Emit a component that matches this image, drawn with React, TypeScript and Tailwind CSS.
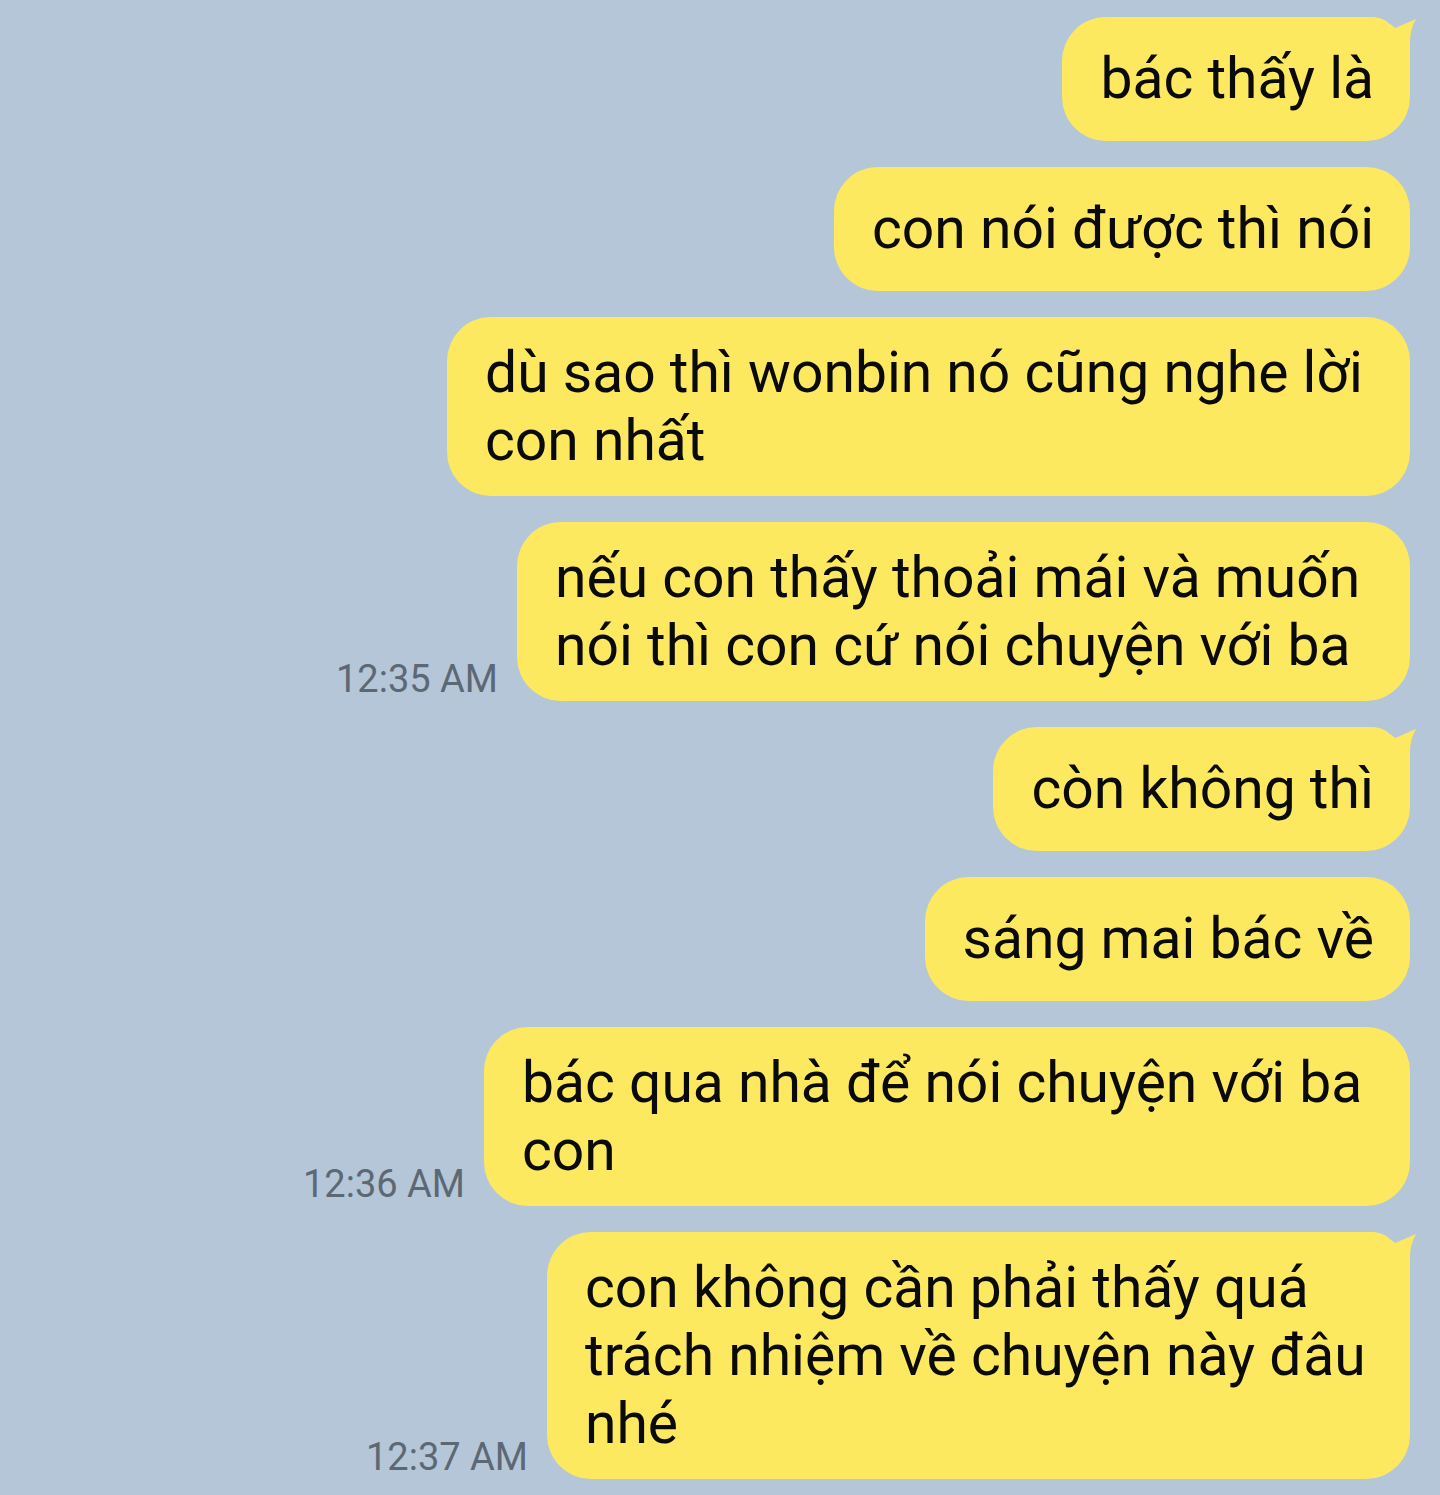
import type { ReactNode } from 'react';

type Message = {
  lines: string[];
  time?: string;
  tail?: boolean;
  width?: string;
};

const messages: Message[] = [
  { lines: ['bác thấy là'], tail: true },
  { lines: ['con nói được thì nói'] },
  { lines: ['dù sao thì wonbin nó cũng nghe lời', 'con nhất'], width: 'w-[963px]' },
  { lines: ['nếu con thấy thoải mái và muốn', 'nói thì con cứ nói chuyện với ba'], time: '12:35 AM', width: 'w-[893px]' },
  { lines: ['còn không thì'], tail: true },
  { lines: ['sáng mai bác về'] },
  { lines: ['bác qua nhà để nói chuyện với ba', 'con'], time: '12:36 AM', width: 'w-[926px]' },
  { lines: ['con không cần phải thấy quá', 'trách nhiệm về chuyện này đâu', 'nhé'], time: '12:37 AM', tail: true, width: 'w-[863px]' },
];

// little "ear" on the top-right corner of the first bubble in a group
function Tail() {
  return (
    <svg className="absolute top-0 right-0 w-[58px] h-[50px]" viewBox="0 0 58 50" fill="none">
      <path d="M0 0 L14 0 Q27 1 33 12 L56 2 Q50 12 50 25 L50 50 L0 50 Z" fill="#fde95f" />
    </svg>
  );
}

function Bubble({ msg }: { msg: Message }) {
  const multi = msg.lines.length > 1;
  const content: ReactNode[] = [];
  msg.lines.forEach((line, i) => {
    if (i > 0) content.push(<br key={`br-${i}`} />);
    content.push(<span key={`l-${i}`}>{line}</span>);
  });

  return (
    <div className="flex justify-end items-end">
      {msg.time && (
        <span className="mr-[19px] text-[38px] leading-[44px] text-[#5d6875] whitespace-nowrap">
          {msg.time}
        </span>
      )}
      <div
        className={`relative bg-[#fde95f] rounded-[44px] pl-[38px] pr-[36px] text-[57px] leading-[68px] text-[#0a0a0a] whitespace-nowrap ${
          multi ? 'pt-[22px] pb-[21px]' : 'py-[28px]'
        } ${msg.width ?? ''}`}
      >
        {msg.tail && (
          <div className="absolute top-0 right-[-8px] w-[58px] h-[50px]">
            <Tail />
          </div>
        )}
        <div className="relative">{content}</div>
      </div>
    </div>
  );
}

export default function App() {
  return (
    <div
      className="w-[1440px] h-[1495px] overflow-hidden bg-[#b5c6d8] pt-[17px] pr-[30px] flex flex-col gap-[26px]"
      style={{ fontFamily: 'Roboto, "Noto Sans", sans-serif' }}
    >
      {messages.map((m, i) => (
        <Bubble key={i} msg={m} />
      ))}
    </div>
  );
}
